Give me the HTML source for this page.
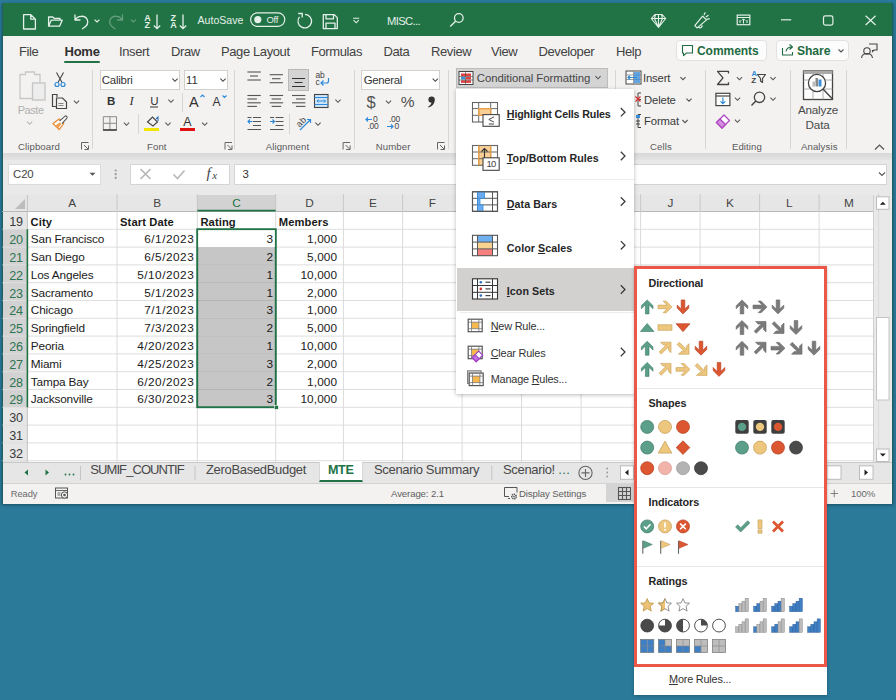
<!DOCTYPE html><html><head><meta charset="utf-8"><style>
html,body{margin:0;padding:0;}
body{width:896px;height:700px;overflow:hidden;position:relative;background:#2b7a9a;font-family:"Liberation Sans", sans-serif;}
.t{position:absolute;white-space:nowrap;font-family:"Liberation Sans", sans-serif;}
.b{position:absolute;box-sizing:border-box;}
.s{position:absolute;left:0;top:0;overflow:visible;}
</style></head><body>
<div class="b" style="left:2px;top:3px;width:891px;height:500.8px;background:#1f5f5f;box-shadow:0 1px 3px rgba(0,20,30,0.45);"></div>
<div class="b" style="left:2.5px;top:3px;width:889.0px;height:500.5px;background:#f3f2f1;"></div>
<div class="b" style="left:2.5px;top:3px;width:889.0px;height:33px;background:#217346;"></div>
<svg class="s" width="896" height="700" viewBox="0 0 896 700" style=""><path d="M23.6,14.6 h7.2 l4.6,4.6 v9.8 h-11.8 z M30.8,14.6 v4.6 h4.6" fill="none" stroke="#e4f0e8" stroke-width="1.3" stroke-linejoin="round"/><path d="M48.6,26.2 v-9.2 h4.2 l1.4,1.4 h5.8 v1.6 M48.6,26.2 l2.6,-6 h11 l-2.6,6 z" fill="none" stroke="#e4f0e8" stroke-width="1.3" stroke-linejoin="round"/><path d="M75,15 v5 h5 M75.3,19.8 C77.5,15.5 85,14.8 87.2,19.5 C88.8,23 86.5,26.5 82.5,28.8" fill="none" stroke="#e4f0e8" stroke-width="1.3" stroke-linecap="round" stroke-linejoin="round"/><path d="M94.6,19.6 l2.4,2.4 l2.4,-2.4" fill="none" stroke="#e4f0e8" stroke-width="1.2"/><g opacity="0.35"><path d="M122.5,15 v5 h-5 M122.2,19.8 C120,15.5 112.5,14.8 110.3,19.5 C108.7,23 111,26.5 115,28.8" fill="none" stroke="#e4f0e8" stroke-width="1.3" stroke-linecap="round" stroke-linejoin="round"/><path d="M131,19.6 l2.4,2.4 l2.4,-2.4" fill="none" stroke="#e4f0e8" stroke-width="1.2"/></g><path d="M157,14.5 v14 M153.8,25.5 l3.2,3.2 l3.2,-3.2" fill="none" stroke="#e4f0e8" stroke-width="1.3"/><path d="M183,14.5 v14 M179.8,25.5 l3.2,3.2 l3.2,-3.2" fill="none" stroke="#e4f0e8" stroke-width="1.3"/><rect x="250.6" y="12.9" width="34.2" height="13.4" rx="6.7" fill="none" stroke="#e4f0e8" stroke-width="1.2"/><circle cx="257.8" cy="19.6" r="3.6" fill="#e4f0e8"/><path d="M299.5,16.8 A6.8,6.8 0 1 0 305,14.3" fill="none" stroke="#e4f0e8" stroke-width="1.3"/><path d="M298.2,13.5 h4 v4" fill="none" stroke="#e4f0e8" stroke-width="1.3"/><path d="M323.3,14.6 h11 l3,3 v11 h-14 z M326,14.6 v4.2 h7.5 v-4.2 M326,28.6 v-5.5 h9 v5.5" fill="none" stroke="#e4f0e8" stroke-width="1.3" stroke-linejoin="round"/><path d="M353.2,18.2 h6 M353.6,20.2 l2.6,2.6 l2.6,-2.6" fill="none" stroke="#e4f0e8" stroke-width="1.1"/><circle cx="458.8" cy="18" r="4.3" fill="none" stroke="#e4f0e8" stroke-width="1.3"/><path d="M455.6,21.3 l-5.4,5.2" stroke="#e4f0e8" stroke-width="1.4"/><path d="M651.3,18.5 l3.6,-4 h7.2 l3.6,4 l-7.2,9 z M651.3,18.5 h14.4 M658.5,14.5 v13 M655.5,14.5 l-1,4 l4,9 M661.5,14.5 l1,4 l-4,9" fill="none" stroke="#e4f0e8" stroke-width="1.1" stroke-linejoin="round"/><path d="M694.8,25.6 L702.6,16.2 L706.6,19.9 L697.2,27.9 Z M698.8,27.1 a1.9,1.9 0 0 0 3.3,-1.6 M704.2,14.6 l0.9,-1.9 M706.2,16.7 l1.9,-1.3 M707.2,19.1 l2.1,-0.3" fill="none" stroke="#e4f0e8" stroke-width="1.2" stroke-linejoin="round" stroke-linecap="round"/><rect x="737.2" y="15.1" width="12.6" height="9.6" fill="none" stroke="#e4f0e8" stroke-width="1.2"/><path d="M737.2,17.5 h12.6 M740,23 v-3 M747,23 v-3 M743.5,23.5 v-4.5 M741.8,20.5 l1.7,-1.7 l1.7,1.7" fill="none" stroke="#e4f0e8" stroke-width="1"/><path d="M781,19.8 h10.2" stroke="#e4f0e8" stroke-width="1.2"/><rect x="823.5" y="15.9" width="9.4" height="9.2" rx="1.8" fill="none" stroke="#e4f0e8" stroke-width="1.2"/><path d="M865.6,15.8 l10,9.2 M875.6,15.8 l-10,9.2" stroke="#e4f0e8" stroke-width="1.2"/></svg>
<div class="t" style="left:144.2px;top:13.50px;height:9px;line-height:9px;font-size:9px;font-weight:700;color:#e4f0e8;letter-spacing:0px;">A</div>
<div class="t" style="left:144.6px;top:21.30px;height:9px;line-height:9px;font-size:9px;font-weight:700;color:#e4f0e8;letter-spacing:0px;">Z</div>
<div class="t" style="left:170.6px;top:13.50px;height:9px;line-height:9px;font-size:9px;font-weight:700;color:#e4f0e8;letter-spacing:0px;">Z</div>
<div class="t" style="left:170.2px;top:21.30px;height:9px;line-height:9px;font-size:9px;font-weight:700;color:#e4f0e8;letter-spacing:0px;">A</div>
<div class="t" style="left:197.5px;top:12.50px;height:15px;line-height:15px;font-size:10.6px;font-weight:400;color:#e4f0e8;letter-spacing:0px;">AutoSave</div>
<div class="t" style="left:266.5px;top:13.30px;height:13px;line-height:13px;font-size:9.5px;font-weight:400;color:#e4f0e8;letter-spacing:-0.3px;">Off</div>
<div class="t" style="left:387px;top:13.30px;height:16px;line-height:16px;font-size:11.2px;font-weight:400;color:#e4f0e8;letter-spacing:-0.6px;">MISC...</div>
<div class="t" style="left:19px;top:43.30px;height:18px;line-height:18px;font-size:13px;font-weight:400;color:#424242;letter-spacing:-0.4px;">File</div>
<div class="t" style="left:119px;top:43.30px;height:18px;line-height:18px;font-size:13px;font-weight:400;color:#424242;letter-spacing:-0.4px;">Insert</div>
<div class="t" style="left:171px;top:43.30px;height:18px;line-height:18px;font-size:13px;font-weight:400;color:#424242;letter-spacing:-0.4px;">Draw</div>
<div class="t" style="left:221px;top:43.30px;height:18px;line-height:18px;font-size:13px;font-weight:400;color:#424242;letter-spacing:-0.4px;">Page Layout</div>
<div class="t" style="left:311px;top:43.30px;height:18px;line-height:18px;font-size:13px;font-weight:400;color:#424242;letter-spacing:-0.4px;">Formulas</div>
<div class="t" style="left:383.5px;top:43.30px;height:18px;line-height:18px;font-size:13px;font-weight:400;color:#424242;letter-spacing:-0.4px;">Data</div>
<div class="t" style="left:431px;top:43.30px;height:18px;line-height:18px;font-size:13px;font-weight:400;color:#424242;letter-spacing:-0.4px;">Review</div>
<div class="t" style="left:491px;top:43.30px;height:18px;line-height:18px;font-size:13px;font-weight:400;color:#424242;letter-spacing:-0.4px;">View</div>
<div class="t" style="left:538.5px;top:43.30px;height:18px;line-height:18px;font-size:13px;font-weight:400;color:#424242;letter-spacing:-0.4px;">Developer</div>
<div class="t" style="left:616px;top:43.30px;height:18px;line-height:18px;font-size:13px;font-weight:400;color:#424242;letter-spacing:-0.4px;">Help</div>
<div class="t" style="left:64.5px;top:43.30px;height:18px;line-height:18px;font-size:13px;font-weight:700;color:#303030;letter-spacing:-0.25px;">Home</div>
<div class="b" style="left:64px;top:61px;width:36px;height:2px;background:#217346;border-radius:1px;"></div>
<div class="b" style="left:675.5px;top:40px;width:91.0px;height:21px;background:#fcfcfc;border:1px solid #e3e1df;border-radius:4px;"></div>
<div class="b" style="left:776px;top:40px;width:73px;height:21px;background:#fcfcfc;border:1px solid #e3e1df;border-radius:4px;"></div>
<svg class="s" width="896" height="700" viewBox="0 0 896 700" style=""><path d="M682.5,45.5 h10 v7.5 h-6 l-3,2.6 v-2.6 h-1 z" fill="none" stroke="#1f6b41" stroke-width="1.1" stroke-linejoin="round"/><path d="M782.5,48 v7 h10 v-3 M786,51.5 c0.5,-3 2.5,-4.5 6,-4.5 M789.5,44.5 l3,2.5 l-3,2.5" fill="none" stroke="#1f6b41" stroke-width="1.1" stroke-linejoin="round"/><path d="M838.5,49.5 l2.5,2.5 l2.5,-2.5" fill="none" stroke="#555" stroke-width="1.1"/><circle cx="867" cy="51" r="3.2" fill="none" stroke="#444" stroke-width="1.1"/><path d="M861.5,58 c0.5,-3.5 2.5,-4.5 5.5,-4.5 c3,0 5,1 5.5,4.5 M869,44 h8 v6 h-3 l-1.5,1.5 v-1.5" fill="none" stroke="#444" stroke-width="1.1"/></svg>
<div class="t" style="left:697px;top:42.50px;height:17px;line-height:17px;font-size:12px;font-weight:700;color:#1f6b41;letter-spacing:-0.05px;">Comments</div>
<div class="t" style="left:797px;top:42.50px;height:17px;line-height:17px;font-size:12.2px;font-weight:700;color:#1f6b41;letter-spacing:-0.1px;">Share</div>
<div class="b" style="left:2.5px;top:152.5px;width:889.0px;height:10.5px;background:linear-gradient(#d8d8d8,#e9e9e9);"></div>
<div class="b" style="left:91.5px;top:70px;width:1.0px;height:79px;background:#d6d6d6;"></div>
<div class="b" style="left:234.2px;top:70px;width:1.0px;height:79px;background:#d6d6d6;"></div>
<div class="b" style="left:353.8px;top:70px;width:1.0px;height:79px;background:#d6d6d6;"></div>
<div class="b" style="left:447.8px;top:70px;width:1.0px;height:79px;background:#d6d6d6;"></div>
<div class="b" style="left:615.2px;top:70px;width:1.0px;height:79px;background:#d6d6d6;"></div>
<div class="b" style="left:704.6px;top:70px;width:1.0px;height:79px;background:#d6d6d6;"></div>
<div class="b" style="left:789.5px;top:70px;width:1.0px;height:79px;background:#d6d6d6;"></div>
<div class="b" style="left:846.2px;top:70px;width:1.0px;height:79px;background:#d6d6d6;"></div>
<div class="t" style="left:18px;top:140.10px;height:13px;line-height:13px;font-size:9.6px;font-weight:400;color:#5a5a5a;letter-spacing:0.1px;">Clipboard</div>
<div class="t" style="left:147px;top:140.10px;height:13px;line-height:13px;font-size:9.6px;font-weight:400;color:#5a5a5a;letter-spacing:0.1px;">Font</div>
<div class="t" style="left:265.7px;top:140.10px;height:13px;line-height:13px;font-size:9.6px;font-weight:400;color:#5a5a5a;letter-spacing:0.1px;">Alignment</div>
<div class="t" style="left:375.8px;top:140.10px;height:13px;line-height:13px;font-size:9.6px;font-weight:400;color:#5a5a5a;letter-spacing:0.1px;">Number</div>
<div class="t" style="left:650px;top:140.10px;height:13px;line-height:13px;font-size:9.6px;font-weight:400;color:#5a5a5a;letter-spacing:0.1px;">Cells</div>
<div class="t" style="left:731.9px;top:140.10px;height:13px;line-height:13px;font-size:9.6px;font-weight:400;color:#5a5a5a;letter-spacing:0.1px;">Editing</div>
<div class="t" style="left:801px;top:140.10px;height:13px;line-height:13px;font-size:9.6px;font-weight:400;color:#5a5a5a;letter-spacing:0.1px;">Analysis</div>
<div class="b" style="left:99.9px;top:69.6px;width:80.5px;height:20.700000000000003px;background:#fff;border:1px solid #d0d0d0;"></div>
<div class="b" style="left:183.7px;top:69.6px;width:44.80000000000001px;height:20.700000000000003px;background:#fff;border:1px solid #d0d0d0;"></div>
<div class="t" style="left:101.8px;top:71.80px;height:16px;line-height:16px;font-size:11.4px;font-weight:400;color:#333;letter-spacing:-0.2px;">Calibri</div>
<div class="t" style="left:186px;top:71.80px;height:16px;line-height:16px;font-size:11.4px;font-weight:400;color:#333;letter-spacing:0px;">11</div>
<div class="b" style="left:182px;top:93px;width:1px;height:19px;background:#d6d6d6;"></div>
<div class="b" style="left:137.5px;top:114px;width:1.0px;height:20px;background:#d6d6d6;"></div>
<div class="t" style="left:107px;top:93.00px;height:16px;line-height:16px;font-size:11.5px;font-weight:700;color:#333;letter-spacing:0px;">B</div>
<div class="t" style="left:129.5px;top:92.00px;height:18px;line-height:18px;font-size:12.5px;font-weight:400;color:#333;letter-spacing:0px;font-style:italic;font-family:'Liberation Serif';">I</div>
<div class="t" style="left:150.3px;top:92.50px;height:16px;line-height:16px;font-size:11.5px;font-weight:400;color:#333;letter-spacing:0px;">U</div>
<div class="t" style="left:189px;top:91.50px;height:20px;line-height:20px;font-size:14.5px;font-weight:400;color:#333;letter-spacing:0px;">A</div>
<div class="t" style="left:212.5px;top:94.00px;height:17px;line-height:17px;font-size:12px;font-weight:400;color:#333;letter-spacing:0px;">A</div>
<div class="b" style="left:144.3px;top:127.6px;width:14.699999999999989px;height:3.8000000000000114px;background:#f2e600;"></div>
<div class="t" style="left:183.2px;top:113.50px;height:17px;line-height:17px;font-size:12.4px;font-weight:400;color:#333;letter-spacing:0px;">A</div>
<div class="b" style="left:180.4px;top:127.6px;width:14.900000000000006px;height:3.8000000000000114px;background:#e01010;"></div>
<div class="b" style="left:288.2px;top:69.3px;width:20.80000000000001px;height:21.5px;background:#d4d4d4;border:1px solid #b8b8b8;"></div>
<div class="t" style="left:315.5px;top:70.50px;height:9px;line-height:9px;font-size:8.5px;font-weight:400;color:#444;letter-spacing:-0.2px;">ab</div>
<div class="t" style="left:315.5px;top:78.00px;height:9px;line-height:9px;font-size:8.5px;font-weight:400;color:#444;letter-spacing:0px;">c</div>
<div class="b" style="left:289.2px;top:114px;width:1.0px;height:20px;background:#d6d6d6;"></div>
<div class="t" style="left:295.5px;top:117px;font-size:9px;color:#444;transform:rotate(-45deg);transform-origin:5px 5px;line-height:10px;">ab</div>
<div class="b" style="left:361.4px;top:69.7px;width:79.0px;height:20.700000000000003px;background:#fff;border:1px solid #d0d0d0;"></div>
<div class="t" style="left:363.8px;top:72.00px;height:16px;line-height:16px;font-size:11.4px;font-weight:400;color:#333;letter-spacing:-0.35px;">General</div>
<div class="t" style="left:366.4px;top:90.70px;height:23px;line-height:23px;font-size:16.5px;font-weight:400;color:#555;letter-spacing:0px;">$</div>
<div class="t" style="left:400.8px;top:91.30px;height:22px;line-height:22px;font-size:15.5px;font-weight:400;color:#505050;letter-spacing:-0.5px;">%</div>
<div class="t" style="left:373px;top:115.30px;height:9px;line-height:9px;font-size:8.5px;font-weight:400;color:#444;letter-spacing:0px;">0</div>
<div class="t" style="left:367.5px;top:122.00px;height:9px;line-height:9px;font-size:8.5px;font-weight:400;color:#444;letter-spacing:-0.3px;">.00</div>
<div class="t" style="left:389px;top:115.30px;height:9px;line-height:9px;font-size:8.5px;font-weight:400;color:#444;letter-spacing:-0.3px;">.00</div>
<div class="t" style="left:394.5px;top:122.00px;height:9px;line-height:9px;font-size:8.5px;font-weight:400;color:#444;letter-spacing:0px;">0</div>
<div class="b" style="left:456.2px;top:67.6px;width:151.8px;height:20.700000000000003px;background:#d4d4d4;border:1px solid #bdbdbd;"></div>
<div class="t" style="left:476.8px;top:70.20px;height:16px;line-height:16px;font-size:11.4px;font-weight:400;color:#454545;letter-spacing:-0.05px;">Conditional Formatting</div>
<div class="t" style="left:643px;top:70.40px;height:16px;line-height:16px;font-size:11.3px;font-weight:400;color:#3a3a3a;letter-spacing:-0.15px;">Insert</div>
<div class="t" style="left:644px;top:91.90px;height:16px;line-height:16px;font-size:11.3px;font-weight:400;color:#3a3a3a;letter-spacing:-0.15px;">Delete</div>
<div class="t" style="left:644px;top:113.30px;height:16px;line-height:16px;font-size:11.3px;font-weight:400;color:#3a3a3a;letter-spacing:-0.15px;">Format</div>
<div class="t" style="left:751.5px;top:70.00px;height:8px;line-height:8px;font-size:7.5px;font-weight:700;color:#2e8ad8;letter-spacing:0px;">A</div>
<div class="t" style="left:751.2px;top:77.00px;height:8px;line-height:8px;font-size:8px;font-weight:700;color:#444;letter-spacing:0px;">Z</div>
<svg class="s" width="896" height="700" viewBox="0 0 896 700" style=""><path d="M81.5,149.5 v-7 h7 M84,145 l4,4 M88.5,145.5 v4 h-4" fill="none" stroke="#666" stroke-width="1"/><path d="M225.0,149.5 v-7 h7 M227.5,145 l4,4 M232.0,145.5 v4 h-4" fill="none" stroke="#666" stroke-width="1"/><path d="M343.1,149.5 v-7 h7 M345.6,145 l4,4 M350.1,145.5 v4 h-4" fill="none" stroke="#666" stroke-width="1"/><path d="M437.5,149.5 v-7 h7 M440,145 l4,4 M444.5,145.5 v4 h-4" fill="none" stroke="#666" stroke-width="1"/><path d="M875,149.5 l4.5,-4.5 l4.5,4.5" fill="none" stroke="#555" stroke-width="1.2"/><path d="M20,74.5 h5.5 v-2.5 h9 v2.5 h5.5 v24 h-20 z" fill="none" stroke="#c8c8c8" stroke-width="1.3"/><rect x="32.5" y="83" width="12.5" height="17" fill="#ededed" stroke="#c4c4c4" stroke-width="1.3"/><path d="M27.0,121.7 l2.6,2.6 l2.6,-2.6" fill="none" stroke="#b5b5b5" stroke-width="1.1"/><path d="M56.5,72.5 l5.5,10 M63.5,72.5 l-5.5,10" stroke="#444" stroke-width="1.1"/><circle cx="57" cy="84.5" r="2" fill="none" stroke="#2e8ad8" stroke-width="1.2"/><circle cx="63" cy="84.5" r="2" fill="none" stroke="#2e8ad8" stroke-width="1.2"/><path d="M57,97 v-2.5 h-4.5 v12 h3.5 M56.5,98 h6 l4,4 v6.5 h-10 z" fill="none" stroke="#444" stroke-width="1.2"/><path d="M58.5,103.5 h5 M58.5,105.5 h5" stroke="#666" stroke-width="0.8"/><path d="M73.9,100.7 l2.6,2.6 l2.6,-2.6" fill="none" stroke="#555" stroke-width="1.1"/><path d="M53,123.5 l6.2,-4.6 l4.6,4.6 l-4.6,6.2 z" fill="#fff" stroke="#e8892e" stroke-width="1.2" stroke-linejoin="round"/><path d="M55.2,125.7 l4.6,-3.4 l1.6,1.6 l-3.4,4.6 z" fill="#f0a050"/><path d="M59.5,121.2 l5.3,-4.8 a1.3,1.3 0 0 1 1.9,1.9 l-4.8,5.3" fill="#fff" stroke="#555" stroke-width="1.1"/><path d="M172.4,78.7 l2.6,2.6 l2.6,-2.6" fill="none" stroke="#444" stroke-width="1.1"/><path d="M220.4,78.7 l2.6,2.6 l2.6,-2.6" fill="none" stroke="#444" stroke-width="1.1"/><path d="M150,107 h8" stroke="#333" stroke-width="1"/><path d="M168.4,99.7 l2.6,2.6 l2.6,-2.6" fill="none" stroke="#555" stroke-width="1.1"/><path d="M200.5,97 l2,-2 l2,2" fill="none" stroke="#2e8ad8" stroke-width="1.2"/><path d="M222.5,95.5 l2,2 l2,-2" fill="none" stroke="#2e8ad8" stroke-width="1.2"/><path d="M103.3,116.7 h13.2 v13.2 h-13.2 z M109.9,116.7 v13.2 M103.3,123.3 h13.2" fill="none" stroke="#8a8a8a" stroke-width="1"/><path d="M103,130 h13.8" stroke="#444" stroke-width="1.6"/><path d="M123.9,122.7 l2.6,2.6 l2.6,-2.6" fill="none" stroke="#555" stroke-width="1.1"/><path d="M147.5,122 l5,-5 l5,5 l-4.5,4 z" fill="none" stroke="#444" stroke-width="1.1"/><path d="M156,119 l2,-2 v4" fill="none" stroke="#2e6fb8" stroke-width="1.1"/><path d="M165.4,122.7 l2.6,2.6 l2.6,-2.6" fill="none" stroke="#555" stroke-width="1.1"/><path d="M202.1,122.7 l2.6,2.6 l2.6,-2.6" fill="none" stroke="#555" stroke-width="1.1"/><path d="M247.4,72 h13.4" stroke="#555" stroke-width="1.1"/><path d="M247.4,76 h0" stroke="#555" stroke-width="1.1"/><path d="M247.4,80 h13.4" stroke="#555" stroke-width="1.1"/><path d="M250,76 h8" stroke="#555" stroke-width="1.1"/><path d="M269.7,74.7 h13.2" stroke="#555" stroke-width="1.1"/><path d="M269.7,82.7 h13.2" stroke="#555" stroke-width="1.1"/><path d="M272,78.7 h8.5" stroke="#555" stroke-width="1.1"/><path d="M292,78.5 h13 M294.5,82.5 h8 M292,86.5 h13" stroke="#333" stroke-width="1.2"/><path d="M328.5,78 v3 a2,2 0 0 1 -2,2 h-5 M323.5,80.5 l-2.5,2.5 l2.5,2.5" fill="none" stroke="#2e8ad8" stroke-width="1.2"/><path d="M247.4,95.5 h13.4" stroke="#555" stroke-width="1.1"/><path d="M247.4,99 h9.5" stroke="#555" stroke-width="1.1"/><path d="M247.4,102.8 h13.4" stroke="#555" stroke-width="1.1"/><path d="M247.4,106.4 h9.5" stroke="#555" stroke-width="1.1"/><path d="M269.7,95.5 h13.4" stroke="#555" stroke-width="1.1"/><path d="M271.65,99 h9.5" stroke="#555" stroke-width="1.1"/><path d="M269.7,102.8 h13.4" stroke="#555" stroke-width="1.1"/><path d="M271.65,106.4 h9.5" stroke="#555" stroke-width="1.1"/><path d="M292.0,95.5 h13.4" stroke="#555" stroke-width="1.1"/><path d="M295.9,99 h9.5" stroke="#555" stroke-width="1.1"/><path d="M292.0,102.8 h13.4" stroke="#555" stroke-width="1.1"/><path d="M295.9,106.4 h9.5" stroke="#555" stroke-width="1.1"/><rect x="314.5" y="94.5" width="13.5" height="13" fill="#cfe6f8" stroke="#444" stroke-width="1.1"/><path d="M314.5,97.5 h13.5 M314.5,104.5 h13.5" stroke="#2e8ad8" stroke-width="1"/><path d="M317,101 h8.5 M318.5,99.5 l-1.5,1.5 l1.5,1.5 M324,99.5 l1.5,1.5 l-1.5,1.5" fill="none" stroke="#2e8ad8" stroke-width="1"/><path d="M335.4,99.7 l2.6,2.6 l2.6,-2.6" fill="none" stroke="#555" stroke-width="1.1"/><path d="M253,117.5 h8 M253,121.5 h8 M253,125.5 h8 M247.5,129.5 h13.5 M247.5,117.5 h4 " stroke="#555" stroke-width="1.1"/><path d="M248,121.5 h4.5 M250,119.5 l-2,2 l2,2" fill="none" stroke="#2e8ad8" stroke-width="1.1"/><path d="M275.5,117.5 h8 M275.5,121.5 h8 M275.5,125.5 h8 M270,129.5 h13.5 M270,117.5 h4" stroke="#555" stroke-width="1.1"/><path d="M270,121.5 h4.5 M272.5,119.5 l2,2 l-2,2" fill="none" stroke="#2e8ad8" stroke-width="1.1"/><path d="M300,130 l10.5,-10.5 M307,119.5 h3.5 v3.5" fill="none" stroke="#2e8ad8" stroke-width="1.2"/><path d="M315.4,122.7 l2.6,2.6 l2.6,-2.6" fill="none" stroke="#555" stroke-width="1.1"/><path d="M432.7,78.7 l2.6,2.6 l2.6,-2.6" fill="none" stroke="#444" stroke-width="1.1"/><path d="M385.9,100.7 l2.6,2.6 l2.6,-2.6" fill="none" stroke="#555" stroke-width="1.1"/><circle cx="431.6" cy="99.6" r="3.2" fill="#333"/><path d="M434.5,100.5 C434.5,104 432,106.5 428.5,107.5 L428.2,106.6 C430.3,105.6 431.6,103.8 431.6,101.8 Z" fill="#333"/><path d="M366,119.5 h6 M368,117.5 l-2,2 l2,2" fill="none" stroke="#2e8ad8" stroke-width="1.2"/><path d="M387,126.5 h6 M391,124.5 l2,2 l-2,2" fill="none" stroke="#2e8ad8" stroke-width="1.2"/><rect x="459" y="71.5" width="14" height="13" fill="#fff" stroke="#444" stroke-width="1"/><rect x="461" y="73.5" width="10" height="2.6" fill="#e04040"/><rect x="461" y="76.9" width="4" height="2.6" fill="#3b8ed8"/><rect x="466" y="76.9" width="5" height="2.6" fill="#e04040"/><rect x="461" y="80.3" width="10" height="2.6" fill="#e04040"/><path d="M465.5,71.5 v13 M459,76.5 h14 M459,80 h14" stroke="#444" stroke-width="0.6"/><path d="M595.4,76.2 l2.6,2.6 l2.6,-2.6" fill="none" stroke="#555" stroke-width="1.1"/><rect x="626" y="71" width="15" height="13" fill="#fff" stroke="#444" stroke-width="1"/><path d="M626,75 h15 M626,79.5 h15 M633.5,71 v13" stroke="#777" stroke-width="0.7"/><rect x="634" y="72" width="6" height="11" fill="#3b8ed8" opacity="0.8"/><path d="M637,77.5 h-9 M630,75.5 l-2,2 l2,2" fill="none" stroke="#2e8ad8" stroke-width="1.2"/><path d="M680.4,77.10000000000001 l2.6,2.6 l2.6,-2.6" fill="none" stroke="#555" stroke-width="1.1"/><path d="M641,93 h-3 v13 h3 M641,99.5 h-3" fill="none" stroke="#444" stroke-width="1"/><path d="M635.5,96.5 l5,5 M640.5,96.5 l-5,5" stroke="#e03030" stroke-width="1.2"/><path d="M686.4,98.60000000000001 l2.6,2.6 l2.6,-2.6" fill="none" stroke="#555" stroke-width="1.1"/><path d="M641,114.5 h-3 v13 h3" fill="none" stroke="#444" stroke-width="1"/><rect x="636" y="115" width="4" height="3" fill="#3b8ed8"/><path d="M636,121 h4 M636,124 h4" stroke="#444" stroke-width="1"/><path d="M682.4,120.0 l2.6,2.6 l2.6,-2.6" fill="none" stroke="#555" stroke-width="1.1"/><path d="M728.5,73.5 v-2.2 h-11 l5.5,6.6 l-5.5,6.6 h11 v-2.2" fill="none" stroke="#444" stroke-width="1.3" stroke-linejoin="round"/><path d="M736.9,77.2 l2.6,2.6 l2.6,-2.6" fill="none" stroke="#555" stroke-width="1.1"/><path d="M757.5,74.5 h8 l-3,4 v4 l-2,-1.5 v-2.5 z" fill="none" stroke="#444" stroke-width="1.2" stroke-linejoin="round"/><path d="M770.4,77.2 l2.6,2.6 l2.6,-2.6" fill="none" stroke="#555" stroke-width="1.1"/><rect x="715.9" y="93.3" width="14" height="12.3" fill="#fff" stroke="#444" stroke-width="1.2"/><path d="M715.9,96 h14" stroke="#444" stroke-width="1.2"/><path d="M722.9,97.5 v6 M720.5,101.3 l2.4,2.4 l2.4,-2.4" fill="none" stroke="#2e8ad8" stroke-width="1.2"/><path d="M734.9,97.7 l2.6,2.6 l2.6,-2.6" fill="none" stroke="#555" stroke-width="1.1"/><circle cx="759.5" cy="97.3" r="5.2" fill="none" stroke="#444" stroke-width="1.3"/><path d="M755.8,101 l-4.3,4.5" stroke="#444" stroke-width="1.4"/><path d="M770.4,97.7 l2.6,2.6 l2.6,-2.6" fill="none" stroke="#555" stroke-width="1.1"/><path d="M716.5,122.5 l7.5,-7.5 l5.5,5.5 l-7.5,7.5 z" fill="#fff" stroke="#b146c2" stroke-width="1.3" stroke-linejoin="round"/><path d="M716.5,122.5 l3.5,-3.5 l5.5,5.5 l-3.5,3.5 z" fill="#d68ee0" stroke="#b146c2" stroke-width="1.3"/><path d="M734.9,119.7 l2.6,2.6 l2.6,-2.6" fill="none" stroke="#555" stroke-width="1.1"/><rect x="803.5" y="71" width="29" height="28.5" fill="#fff" stroke="#444" stroke-width="1.3"/><rect x="803.5" y="71" width="29" height="3" fill="#aaa"/><path d="M803.5,80 h29 M803.5,89 h29 M813,74 v25.5 M823,74 v25.5" stroke="#999" stroke-width="0.8"/><circle cx="817" cy="83" r="8.6" fill="#fff" stroke="#444" stroke-width="1.3"/><path d="M823,89 l9,9.5" stroke="#444" stroke-width="1.4"/><rect x="812.5" y="81.5" width="2.5" height="5" fill="#bbb"/><rect x="815.5" y="78" width="2.5" height="8.5" fill="#888" /><rect x="818.5" y="79.5" width="3" height="7" fill="#3b8ed8"/></svg>
<div class="t" style="left:668px;width:300px;text-align:center;top:101.70px;height:16px;line-height:16px;font-size:11.7px;font-weight:400;color:#4a4a4a;letter-spacing:-0.2px;">Analyze</div>
<div class="t" style="left:667.6px;width:300px;text-align:center;top:116.50px;height:16px;line-height:16px;font-size:11.7px;font-weight:400;color:#4a4a4a;letter-spacing:-0.1px;">Data</div>
<div class="t" style="left:17.7px;top:102.80px;height:15px;line-height:15px;font-size:11px;font-weight:400;color:#b0b0b0;letter-spacing:-0.45px;">Paste</div>
<div class="b" style="left:2.5px;top:160px;width:889.0px;height:35px;background:#e9e9e9;"></div>
<div class="b" style="left:8px;top:163.5px;width:93px;height:21.5px;background:#fff;border:1px solid #dcdcdc;"></div>
<div class="t" style="left:13px;top:166.30px;height:16px;line-height:16px;font-size:11.4px;font-weight:400;color:#444;letter-spacing:-0.1px;">C20</div>
<div class="b" style="left:129.7px;top:163.5px;width:100.5px;height:21.30000000000001px;background:#fff;border:1px solid #d4d4d4;"></div>
<div class="b" style="left:233.5px;top:163.5px;width:653.9px;height:21.30000000000001px;background:#fff;border:1px solid #d4d4d4;"></div>
<svg class="s" width="896" height="700" viewBox="0 0 896 700" style=""><path d="M89.5,172.8 h6 l-3,3 z" fill="#555"/><circle cx="115.7" cy="170.5" r="1.1" fill="#999"/><circle cx="115.7" cy="174.2" r="1.1" fill="#999"/><circle cx="115.7" cy="177.9" r="1.1" fill="#999"/><path d="M140.5,169 l10,10 M150.5,169 l-10,10" stroke="#b8b8b8" stroke-width="1.7"/><path d="M173.5,174.5 l4,4 l7,-8" fill="none" stroke="#b8b8b8" stroke-width="1.7"/><path d="M879,172.5 l3,3 l3,-3" fill="none" stroke="#555" stroke-width="1.1"/></svg>
<div class="t" style="left:206.5px;top:163.30px;height:21px;line-height:21px;font-size:15px;font-weight:400;color:#444;letter-spacing:0px;font-style:italic;font-family:'Liberation Serif';">f</div>
<div class="t" style="left:212.3px;top:168.10px;height:15px;line-height:15px;font-size:11px;font-weight:400;color:#444;letter-spacing:0px;font-style:italic;font-family:'Liberation Serif';">x</div>
<div class="t" style="left:242.5px;top:166.30px;height:16px;line-height:16px;font-size:11.4px;font-weight:400;color:#333;letter-spacing:0px;">3</div>
<div class="b" style="left:2.5px;top:195px;width:889.0px;height:16.5px;background:#e6e6e6;"></div>
<div class="b" style="left:27.4px;top:211.5px;width:846.1px;height:250.5px;background:#fff;"></div>
<div class="b" style="left:2.5px;top:211.5px;width:24.9px;height:250.5px;background:#e6e6e6;"></div>
<div class="b" style="left:873.5px;top:195px;width:18.0px;height:267px;background:#e9e9e9;"></div>
<div class="b" style="left:2.5px;top:229.3px;width:24.9px;height:178.0px;background:#d2d2d2;"></div>
<div class="b" style="left:197.3px;top:195px;width:78.39999999999998px;height:16.5px;background:#d2d2d2;"></div>
<div class="b" style="left:197.3px;top:247.1px;width:78.39999999999998px;height:160.20000000000002px;background:#c6c6c6;"></div>
<svg class="s" width="896" height="700" viewBox="0 0 896 700" style=""><path d="M2.5,211.50 H873.5" stroke="#dedede" stroke-width="1"/><path d="M2.5,229.30 H873.5" stroke="#dedede" stroke-width="1"/><path d="M2.5,247.10 H873.5" stroke="#dedede" stroke-width="1"/><path d="M2.5,264.90 H873.5" stroke="#dedede" stroke-width="1"/><path d="M2.5,282.70 H873.5" stroke="#dedede" stroke-width="1"/><path d="M2.5,300.50 H873.5" stroke="#dedede" stroke-width="1"/><path d="M2.5,318.30 H873.5" stroke="#dedede" stroke-width="1"/><path d="M2.5,336.10 H873.5" stroke="#dedede" stroke-width="1"/><path d="M2.5,353.90 H873.5" stroke="#dedede" stroke-width="1"/><path d="M2.5,371.70 H873.5" stroke="#dedede" stroke-width="1"/><path d="M2.5,389.50 H873.5" stroke="#dedede" stroke-width="1"/><path d="M2.5,407.30 H873.5" stroke="#dedede" stroke-width="1"/><path d="M2.5,425.10 H873.5" stroke="#dedede" stroke-width="1"/><path d="M2.5,442.90 H873.5" stroke="#dedede" stroke-width="1"/><path d="M2.5,460.70 H873.5" stroke="#dedede" stroke-width="1"/><path d="M2.5,211.5 H873.5" stroke="#b9b9b9" stroke-width="1"/><path d="M197.3,247.10 H275.7" stroke="#b4b4b4" stroke-width="1"/><path d="M197.3,264.90 H275.7" stroke="#b4b4b4" stroke-width="1"/><path d="M197.3,282.70 H275.7" stroke="#b4b4b4" stroke-width="1"/><path d="M197.3,300.50 H275.7" stroke="#b4b4b4" stroke-width="1"/><path d="M197.3,318.30 H275.7" stroke="#b4b4b4" stroke-width="1"/><path d="M197.3,336.10 H275.7" stroke="#b4b4b4" stroke-width="1"/><path d="M197.3,353.90 H275.7" stroke="#b4b4b4" stroke-width="1"/><path d="M197.3,371.70 H275.7" stroke="#b4b4b4" stroke-width="1"/><path d="M197.3,389.50 H275.7" stroke="#b4b4b4" stroke-width="1"/><path d="M117,211.5 V462" stroke="#dadada" stroke-width="1"/><path d="M117,194 V211.5" stroke="#c8c8c8" stroke-width="1"/><path d="M197.3,211.5 V462" stroke="#dadada" stroke-width="1"/><path d="M197.3,194 V211.5" stroke="#c8c8c8" stroke-width="1"/><path d="M275.7,211.5 V462" stroke="#dadada" stroke-width="1"/><path d="M275.7,194 V211.5" stroke="#c8c8c8" stroke-width="1"/><path d="M343.4,211.5 V462" stroke="#dadada" stroke-width="1"/><path d="M343.4,194 V211.5" stroke="#c8c8c8" stroke-width="1"/><path d="M402.6,211.5 V462" stroke="#dadada" stroke-width="1"/><path d="M402.6,194 V211.5" stroke="#c8c8c8" stroke-width="1"/><path d="M462.1,211.5 V462" stroke="#dadada" stroke-width="1"/><path d="M462.1,194 V211.5" stroke="#c8c8c8" stroke-width="1"/><path d="M521.6,211.5 V462" stroke="#dadada" stroke-width="1"/><path d="M521.6,194 V211.5" stroke="#c8c8c8" stroke-width="1"/><path d="M581.1,211.5 V462" stroke="#dadada" stroke-width="1"/><path d="M581.1,194 V211.5" stroke="#c8c8c8" stroke-width="1"/><path d="M640.6,211.5 V462" stroke="#dadada" stroke-width="1"/><path d="M640.6,194 V211.5" stroke="#c8c8c8" stroke-width="1"/><path d="M700.1,211.5 V462" stroke="#dadada" stroke-width="1"/><path d="M700.1,194 V211.5" stroke="#c8c8c8" stroke-width="1"/><path d="M759.6,211.5 V462" stroke="#dadada" stroke-width="1"/><path d="M759.6,194 V211.5" stroke="#c8c8c8" stroke-width="1"/><path d="M819.1,211.5 V462" stroke="#dadada" stroke-width="1"/><path d="M819.1,194 V211.5" stroke="#c8c8c8" stroke-width="1"/><path d="M878.6,211.5 V462" stroke="#dadada" stroke-width="1"/><path d="M878.6,194 V211.5" stroke="#c8c8c8" stroke-width="1"/><path d="M27.4,195 V462" stroke="#c3c3c3" stroke-width="1"/><path d="M25,199 v10 h-10 z" fill="#bdbdbd"/><path d="M27.4,229.30 V407.30" stroke="#217346" stroke-width="1.6"/><path d="M197.3,210.7 H275.7" stroke="#217346" stroke-width="1.8"/><rect x="197.3" y="229.30" width="78.4" height="178.00" fill="none" stroke="#217346" stroke-width="1.6"/><rect x="197.3" y="229.30" width="78.4" height="17.80" fill="#fff" stroke="none"/><rect x="197.3" y="229.30" width="78.4" height="178.00" fill="none" stroke="#217346" stroke-width="1.6"/><rect x="274.3" y="405.3" width="4" height="4" fill="#217346" stroke="#fff" stroke-width="0.6"/><rect x="876.5" y="196.8" width="12.5" height="12.5" fill="#fff" stroke="#bbb" stroke-width="1"/><path d="M879.8,204.8 h6 l-3,-3 z" fill="#222"/><rect x="876.5" y="317.5" width="12.5" height="82.5" fill="#fff" stroke="#c4c4c4" stroke-width="1"/><path d="M873.5,195 V462" stroke="#d0d0d0" stroke-width="1"/><rect x="876.5" y="449" width="12.5" height="12.5" fill="#fff" stroke="#bbb" stroke-width="1"/><path d="M879.8,453.5 h6 l-3,3 z" fill="#222"/></svg>
<div class="t" style="left:-77.8px;width:300px;text-align:center;top:195.00px;height:17px;line-height:17px;font-size:11.8px;font-weight:400;color:#444;letter-spacing:0px;">A</div>
<div class="t" style="left:7.150000000000006px;width:300px;text-align:center;top:195.00px;height:17px;line-height:17px;font-size:11.8px;font-weight:400;color:#444;letter-spacing:0px;">B</div>
<div class="t" style="left:86.5px;width:300px;text-align:center;top:195.00px;height:17px;line-height:17px;font-size:11.8px;font-weight:400;color:#217346;letter-spacing:0px;">C</div>
<div class="t" style="left:159.54999999999995px;width:300px;text-align:center;top:195.00px;height:17px;line-height:17px;font-size:11.8px;font-weight:400;color:#444;letter-spacing:0px;">D</div>
<div class="t" style="left:223.0px;width:300px;text-align:center;top:195.00px;height:17px;line-height:17px;font-size:11.8px;font-weight:400;color:#444;letter-spacing:0px;">E</div>
<div class="t" style="left:282.35px;width:300px;text-align:center;top:195.00px;height:17px;line-height:17px;font-size:11.8px;font-weight:400;color:#444;letter-spacing:0px;">F</div>
<div class="t" style="left:341.85px;width:300px;text-align:center;top:195.00px;height:17px;line-height:17px;font-size:11.8px;font-weight:400;color:#444;letter-spacing:0px;">G</div>
<div class="t" style="left:401.35px;width:300px;text-align:center;top:195.00px;height:17px;line-height:17px;font-size:11.8px;font-weight:400;color:#444;letter-spacing:0px;">H</div>
<div class="t" style="left:460.85px;width:300px;text-align:center;top:195.00px;height:17px;line-height:17px;font-size:11.8px;font-weight:400;color:#444;letter-spacing:0px;">I</div>
<div class="t" style="left:520.35px;width:300px;text-align:center;top:195.00px;height:17px;line-height:17px;font-size:11.8px;font-weight:400;color:#444;letter-spacing:0px;">J</div>
<div class="t" style="left:579.85px;width:300px;text-align:center;top:195.00px;height:17px;line-height:17px;font-size:11.8px;font-weight:400;color:#444;letter-spacing:0px;">K</div>
<div class="t" style="left:639.35px;width:300px;text-align:center;top:195.00px;height:17px;line-height:17px;font-size:11.8px;font-weight:400;color:#444;letter-spacing:0px;">L</div>
<div class="t" style="left:698.85px;width:300px;text-align:center;top:195.00px;height:17px;line-height:17px;font-size:11.8px;font-weight:400;color:#444;letter-spacing:0px;">M</div>
<div class="t" style="left:-134.0px;width:300px;text-align:center;top:213.30px;height:18px;line-height:18px;font-size:12.6px;font-weight:400;color:#3a3a3a;letter-spacing:-0.3px;">19</div>
<div class="t" style="left:-134.0px;width:300px;text-align:center;top:231.10px;height:18px;line-height:18px;font-size:12.6px;font-weight:400;color:#2d7350;letter-spacing:-0.3px;">20</div>
<div class="t" style="left:-134.0px;width:300px;text-align:center;top:248.90px;height:18px;line-height:18px;font-size:12.6px;font-weight:400;color:#2d7350;letter-spacing:-0.3px;">21</div>
<div class="t" style="left:-134.0px;width:300px;text-align:center;top:266.70px;height:18px;line-height:18px;font-size:12.6px;font-weight:400;color:#2d7350;letter-spacing:-0.3px;">22</div>
<div class="t" style="left:-134.0px;width:300px;text-align:center;top:284.50px;height:18px;line-height:18px;font-size:12.6px;font-weight:400;color:#2d7350;letter-spacing:-0.3px;">23</div>
<div class="t" style="left:-134.0px;width:300px;text-align:center;top:302.30px;height:18px;line-height:18px;font-size:12.6px;font-weight:400;color:#2d7350;letter-spacing:-0.3px;">24</div>
<div class="t" style="left:-134.0px;width:300px;text-align:center;top:320.10px;height:18px;line-height:18px;font-size:12.6px;font-weight:400;color:#2d7350;letter-spacing:-0.3px;">25</div>
<div class="t" style="left:-134.0px;width:300px;text-align:center;top:337.90px;height:18px;line-height:18px;font-size:12.6px;font-weight:400;color:#2d7350;letter-spacing:-0.3px;">26</div>
<div class="t" style="left:-134.0px;width:300px;text-align:center;top:355.70px;height:18px;line-height:18px;font-size:12.6px;font-weight:400;color:#2d7350;letter-spacing:-0.3px;">27</div>
<div class="t" style="left:-134.0px;width:300px;text-align:center;top:373.50px;height:18px;line-height:18px;font-size:12.6px;font-weight:400;color:#2d7350;letter-spacing:-0.3px;">28</div>
<div class="t" style="left:-134.0px;width:300px;text-align:center;top:391.30px;height:18px;line-height:18px;font-size:12.6px;font-weight:400;color:#2d7350;letter-spacing:-0.3px;">29</div>
<div class="t" style="left:-134.0px;width:300px;text-align:center;top:409.10px;height:18px;line-height:18px;font-size:12.6px;font-weight:400;color:#3a3a3a;letter-spacing:-0.3px;">30</div>
<div class="t" style="left:-134.0px;width:300px;text-align:center;top:426.90px;height:18px;line-height:18px;font-size:12.6px;font-weight:400;color:#3a3a3a;letter-spacing:-0.3px;">31</div>
<div class="t" style="left:-134.0px;width:300px;text-align:center;top:444.70px;height:18px;line-height:18px;font-size:12.6px;font-weight:400;color:#3a3a3a;letter-spacing:-0.3px;">32</div>
<div class="t" style="left:30.5px;top:213.80px;height:16px;line-height:16px;font-size:11.2px;font-weight:700;color:#1a1a1a;letter-spacing:0.1px;">City</div>
<div class="t" style="left:120px;top:213.80px;height:16px;line-height:16px;font-size:11.2px;font-weight:700;color:#1a1a1a;letter-spacing:0.1px;">Start Date</div>
<div class="t" style="left:200.4px;top:213.80px;height:16px;line-height:16px;font-size:11.2px;font-weight:700;color:#1a1a1a;letter-spacing:0.1px;">Rating</div>
<div class="t" style="left:278.8px;top:213.80px;height:16px;line-height:16px;font-size:11.2px;font-weight:700;color:#1a1a1a;letter-spacing:0.1px;">Members</div>
<div class="t" style="left:30.8px;top:231.10px;height:17px;line-height:17px;font-size:11.8px;font-weight:400;color:#1a1a1a;letter-spacing:-0.15px;">San Francisco</div>
<div class="t" style="left:-105.80000000000001px;width:300px;text-align:right;top:231.10px;height:17px;line-height:17px;font-size:11.8px;font-weight:400;color:#1a1a1a;letter-spacing:0.5px;">6/1/2023</div>
<div class="t" style="left:-27px;width:300px;text-align:right;top:231.10px;height:17px;line-height:17px;font-size:11.8px;font-weight:400;color:#1a1a1a;letter-spacing:0px;">3</div>
<div class="t" style="left:37.19999999999999px;width:300px;text-align:right;top:231.10px;height:17px;line-height:17px;font-size:11.8px;font-weight:400;color:#1a1a1a;letter-spacing:0.12px;">1,000</div>
<div class="t" style="left:30.8px;top:248.90px;height:17px;line-height:17px;font-size:11.8px;font-weight:400;color:#1a1a1a;letter-spacing:-0.15px;">San Diego</div>
<div class="t" style="left:-105.80000000000001px;width:300px;text-align:right;top:248.90px;height:17px;line-height:17px;font-size:11.8px;font-weight:400;color:#1a1a1a;letter-spacing:0.5px;">6/5/2023</div>
<div class="t" style="left:-27px;width:300px;text-align:right;top:248.90px;height:17px;line-height:17px;font-size:11.8px;font-weight:400;color:#1a1a1a;letter-spacing:0px;">2</div>
<div class="t" style="left:37.19999999999999px;width:300px;text-align:right;top:248.90px;height:17px;line-height:17px;font-size:11.8px;font-weight:400;color:#1a1a1a;letter-spacing:0.12px;">5,000</div>
<div class="t" style="left:30.8px;top:266.70px;height:17px;line-height:17px;font-size:11.8px;font-weight:400;color:#1a1a1a;letter-spacing:-0.15px;">Los Angeles</div>
<div class="t" style="left:-105.80000000000001px;width:300px;text-align:right;top:266.70px;height:17px;line-height:17px;font-size:11.8px;font-weight:400;color:#1a1a1a;letter-spacing:0.5px;">5/10/2023</div>
<div class="t" style="left:-27px;width:300px;text-align:right;top:266.70px;height:17px;line-height:17px;font-size:11.8px;font-weight:400;color:#1a1a1a;letter-spacing:0px;">1</div>
<div class="t" style="left:37.19999999999999px;width:300px;text-align:right;top:266.70px;height:17px;line-height:17px;font-size:11.8px;font-weight:400;color:#1a1a1a;letter-spacing:0.12px;">10,000</div>
<div class="t" style="left:30.8px;top:284.50px;height:17px;line-height:17px;font-size:11.8px;font-weight:400;color:#1a1a1a;letter-spacing:-0.15px;">Sacramento</div>
<div class="t" style="left:-105.80000000000001px;width:300px;text-align:right;top:284.50px;height:17px;line-height:17px;font-size:11.8px;font-weight:400;color:#1a1a1a;letter-spacing:0.5px;">5/1/2023</div>
<div class="t" style="left:-27px;width:300px;text-align:right;top:284.50px;height:17px;line-height:17px;font-size:11.8px;font-weight:400;color:#1a1a1a;letter-spacing:0px;">1</div>
<div class="t" style="left:37.19999999999999px;width:300px;text-align:right;top:284.50px;height:17px;line-height:17px;font-size:11.8px;font-weight:400;color:#1a1a1a;letter-spacing:0.12px;">2,000</div>
<div class="t" style="left:30.8px;top:302.30px;height:17px;line-height:17px;font-size:11.8px;font-weight:400;color:#1a1a1a;letter-spacing:-0.15px;">Chicago</div>
<div class="t" style="left:-105.80000000000001px;width:300px;text-align:right;top:302.30px;height:17px;line-height:17px;font-size:11.8px;font-weight:400;color:#1a1a1a;letter-spacing:0.5px;">7/1/2023</div>
<div class="t" style="left:-27px;width:300px;text-align:right;top:302.30px;height:17px;line-height:17px;font-size:11.8px;font-weight:400;color:#1a1a1a;letter-spacing:0px;">3</div>
<div class="t" style="left:37.19999999999999px;width:300px;text-align:right;top:302.30px;height:17px;line-height:17px;font-size:11.8px;font-weight:400;color:#1a1a1a;letter-spacing:0.12px;">1,000</div>
<div class="t" style="left:30.8px;top:320.10px;height:17px;line-height:17px;font-size:11.8px;font-weight:400;color:#1a1a1a;letter-spacing:-0.15px;">Springfield</div>
<div class="t" style="left:-105.80000000000001px;width:300px;text-align:right;top:320.10px;height:17px;line-height:17px;font-size:11.8px;font-weight:400;color:#1a1a1a;letter-spacing:0.5px;">7/3/2023</div>
<div class="t" style="left:-27px;width:300px;text-align:right;top:320.10px;height:17px;line-height:17px;font-size:11.8px;font-weight:400;color:#1a1a1a;letter-spacing:0px;">2</div>
<div class="t" style="left:37.19999999999999px;width:300px;text-align:right;top:320.10px;height:17px;line-height:17px;font-size:11.8px;font-weight:400;color:#1a1a1a;letter-spacing:0.12px;">5,000</div>
<div class="t" style="left:30.8px;top:337.90px;height:17px;line-height:17px;font-size:11.8px;font-weight:400;color:#1a1a1a;letter-spacing:-0.15px;">Peoria</div>
<div class="t" style="left:-105.80000000000001px;width:300px;text-align:right;top:337.90px;height:17px;line-height:17px;font-size:11.8px;font-weight:400;color:#1a1a1a;letter-spacing:0.5px;">4/20/2023</div>
<div class="t" style="left:-27px;width:300px;text-align:right;top:337.90px;height:17px;line-height:17px;font-size:11.8px;font-weight:400;color:#1a1a1a;letter-spacing:0px;">1</div>
<div class="t" style="left:37.19999999999999px;width:300px;text-align:right;top:337.90px;height:17px;line-height:17px;font-size:11.8px;font-weight:400;color:#1a1a1a;letter-spacing:0.12px;">10,000</div>
<div class="t" style="left:30.8px;top:355.70px;height:17px;line-height:17px;font-size:11.8px;font-weight:400;color:#1a1a1a;letter-spacing:-0.15px;">Miami</div>
<div class="t" style="left:-105.80000000000001px;width:300px;text-align:right;top:355.70px;height:17px;line-height:17px;font-size:11.8px;font-weight:400;color:#1a1a1a;letter-spacing:0.5px;">4/25/2023</div>
<div class="t" style="left:-27px;width:300px;text-align:right;top:355.70px;height:17px;line-height:17px;font-size:11.8px;font-weight:400;color:#1a1a1a;letter-spacing:0px;">3</div>
<div class="t" style="left:37.19999999999999px;width:300px;text-align:right;top:355.70px;height:17px;line-height:17px;font-size:11.8px;font-weight:400;color:#1a1a1a;letter-spacing:0.12px;">2,000</div>
<div class="t" style="left:30.8px;top:373.50px;height:17px;line-height:17px;font-size:11.8px;font-weight:400;color:#1a1a1a;letter-spacing:-0.15px;">Tampa Bay</div>
<div class="t" style="left:-105.80000000000001px;width:300px;text-align:right;top:373.50px;height:17px;line-height:17px;font-size:11.8px;font-weight:400;color:#1a1a1a;letter-spacing:0.5px;">6/20/2023</div>
<div class="t" style="left:-27px;width:300px;text-align:right;top:373.50px;height:17px;line-height:17px;font-size:11.8px;font-weight:400;color:#1a1a1a;letter-spacing:0px;">2</div>
<div class="t" style="left:37.19999999999999px;width:300px;text-align:right;top:373.50px;height:17px;line-height:17px;font-size:11.8px;font-weight:400;color:#1a1a1a;letter-spacing:0.12px;">1,000</div>
<div class="t" style="left:30.8px;top:391.30px;height:17px;line-height:17px;font-size:11.8px;font-weight:400;color:#1a1a1a;letter-spacing:-0.15px;">Jacksonville</div>
<div class="t" style="left:-105.80000000000001px;width:300px;text-align:right;top:391.30px;height:17px;line-height:17px;font-size:11.8px;font-weight:400;color:#1a1a1a;letter-spacing:0.5px;">6/30/2023</div>
<div class="t" style="left:-27px;width:300px;text-align:right;top:391.30px;height:17px;line-height:17px;font-size:11.8px;font-weight:400;color:#1a1a1a;letter-spacing:0px;">3</div>
<div class="t" style="left:37.19999999999999px;width:300px;text-align:right;top:391.30px;height:17px;line-height:17px;font-size:11.8px;font-weight:400;color:#1a1a1a;letter-spacing:0.12px;">10,000</div>
<div class="b" style="left:2.5px;top:462px;width:889.0px;height:21.19999999999999px;background:#e6e6e6;border-top:1px solid #c8c8c8;"></div>
<div class="b" style="left:319px;top:462px;width:43.60000000000002px;height:19.5px;background:#fff;border-bottom:2px solid #217346;border-left:1px solid #d6d6d6;border-right:1px solid #d6d6d6;"></div>
<svg class="s" width="896" height="700" viewBox="0 0 896 700" style=""><path d="M28,469.5 v6 l-3.5,-3 z" fill="#217346"/><path d="M45.5,469.5 v6 l3.5,-3 z" fill="#217346"/><circle cx="65.5" cy="474.5" r="0.9" fill="#217346"/><circle cx="69.5" cy="474.5" r="0.9" fill="#217346"/><circle cx="73.5" cy="474.5" r="0.9" fill="#217346"/><path d="M80.5,466 v14 M195,466 v14 M491.8,466 v14" stroke="#c4c4c4" stroke-width="1"/><circle cx="585.5" cy="472.9" r="6.6" fill="none" stroke="#666" stroke-width="1.1"/><path d="M581.5,472.9 h8 M585.5,468.9 v8" stroke="#666" stroke-width="1.1"/><circle cx="607.2" cy="468.5" r="0.9" fill="#999"/><circle cx="607.2" cy="472.5" r="0.9" fill="#999"/><circle cx="607.2" cy="476.5" r="0.9" fill="#999"/><rect x="620.5" y="465.8" width="13" height="13.5" fill="#fff" stroke="#bbb" stroke-width="1"/><path d="M628.5,469.5 v6 l-3.5,-3 z" fill="#222"/><rect x="827" y="465.8" width="14" height="13.5" fill="#fff" stroke="#bbb" stroke-width="1"/><rect x="859.5" y="465.8" width="13.5" height="13.5" fill="#fff" stroke="#bbb" stroke-width="1"/><path d="M864.5,469.5 v6 l3.5,-3 z" fill="#222"/></svg>
<div class="t" style="left:90.3px;top:461.30px;height:18px;line-height:18px;font-size:13px;font-weight:400;color:#484848;letter-spacing:-0.92px;">SUMIF_COUNTIF</div>
<div class="t" style="left:206px;top:461.30px;height:18px;line-height:18px;font-size:13px;font-weight:400;color:#484848;letter-spacing:-0.32px;">ZeroBasedBudget</div>
<div class="t" style="left:328px;top:461.30px;height:18px;line-height:18px;font-size:12.6px;font-weight:700;color:#217346;letter-spacing:-0.4px;">MTE</div>
<div class="t" style="left:374px;top:461.30px;height:18px;line-height:18px;font-size:13px;font-weight:400;color:#484848;letter-spacing:-0.34px;">Scenario Summary</div>
<div class="t" style="left:503px;top:461.30px;height:18px;line-height:18px;font-size:13px;font-weight:400;color:#484848;letter-spacing:-0.34px;">Scenario! <span style="color:#217346;letter-spacing:0.5px">...</span></div>
<div class="b" style="left:2.5px;top:483.2px;width:889.0px;height:19.100000000000023px;background:#f3f2f1;border-top:1px solid #d2d2d2;"></div>
<div class="b" style="left:606px;top:483.2px;width:28px;height:19.30000000000001px;background:#d4d4d4;"></div>
<svg class="s" width="896" height="700" viewBox="0 0 896 700" style=""><rect x="55.5" y="488" width="12" height="10" fill="none" stroke="#555" stroke-width="1"/><path d="M55.5,490.5 h12 M57.5,493 h3 M57.5,495 h3" stroke="#555" stroke-width="0.9"/><circle cx="64.5" cy="495" r="3.2" fill="#f3f2f1" stroke="#555" stroke-width="1"/><circle cx="64.5" cy="495" r="1.3" fill="#555"/><path d="M509,496.5 h-4.5 v-9 h12.5 v5" fill="none" stroke="#555" stroke-width="1"/><path d="M508,498.5 h2" stroke="#555" stroke-width="1"/><circle cx="514" cy="496.5" r="2.2" fill="#f3f2f1" stroke="#555" stroke-width="1.6" stroke-dasharray="1.2,0.6"/><circle cx="514" cy="496.5" r="0.8" fill="#555"/><rect x="618.5" y="487.5" width="12" height="12" fill="none" stroke="#555" stroke-width="1.1"/><path d="M622.5,487.5 v12 M626.5,487.5 v12 M618.5,491.5 h12 M618.5,495.5 h12" stroke="#555" stroke-width="1.1"/><path d="M830.5,493.5 h7.5 M834.25,489.75 v7.5" stroke="#666" stroke-width="0.8"/></svg>
<div class="t" style="left:10.8px;top:487.00px;height:13px;line-height:13px;font-size:9.4px;font-weight:400;color:#6a6a6a;letter-spacing:-0.1px;">Ready</div>
<div class="t" style="left:391px;top:487.00px;height:13px;line-height:13px;font-size:9.6px;font-weight:400;color:#5e5e5e;letter-spacing:-0.1px;">Average: 2.1</div>
<div class="t" style="left:519px;top:487.00px;height:13px;line-height:13px;font-size:9.6px;font-weight:400;color:#5e5e5e;letter-spacing:-0.1px;">Display Settings</div>
<div class="t" style="left:851px;top:487.00px;height:13px;line-height:13px;font-size:9.6px;font-weight:400;color:#6a6a6a;letter-spacing:-0.1px;">100%</div>
<div class="b" style="left:456.4px;top:89.2px;width:177.6px;height:304.8px;background:#fff;box-shadow:0 1px 4px rgba(0,0,0,0.28);"></div>
<div class="b" style="left:457px;top:268px;width:177px;height:43px;background:#d2d1cf;"></div>
<div class="b" style="left:460px;top:312px;width:174px;height:1px;background:#ececec;"></div>
<div class="b" style="left:498px;top:178.6px;width:136px;height:1.0px;background:#ececec;"></div>
<svg class="s" width="896" height="700" viewBox="0 0 896 700" style=""><rect x="478.7" y="108.6" width="12" height="6.7" fill="#f9cf95"/><rect x="472.5" y="102.5" width="25.0" height="19.5" fill="none" stroke="#666" stroke-width="1.1"/><path d="M478.7,102.5 V122" stroke="#666" stroke-width="0.9900000000000001"/><path d="M490.7,102.5 V122" stroke="#666" stroke-width="0.9900000000000001"/><path d="M472.5,108.6 H497.5" stroke="#666" stroke-width="0.9900000000000001"/><path d="M472.5,115.3 H497.5" stroke="#666" stroke-width="0.9900000000000001"/><path d="M478.7,108.6 h12 v6.7 h-12 z" fill="none" stroke="#f0a040" stroke-width="1.2"/><rect x="483" y="114.6" width="16.2" height="11.7" fill="#fff" stroke="#444" stroke-width="1.1"/><path d="M494,116.9 l-5.2,2.6 l5.2,2.6 M488.8,124 h5.2" fill="none" stroke="#333" stroke-width="0.9"/><rect x="478.7" y="145.5" width="12" height="19.8" fill="#f9cf95"/><rect x="472.5" y="145.5" width="25.0" height="19.80000000000001" fill="none" stroke="#666" stroke-width="1.1"/><path d="M478.7,145.5 V165.3" stroke="#666" stroke-width="0.9900000000000001"/><path d="M490.7,145.5 V165.3" stroke="#666" stroke-width="0.9900000000000001"/><path d="M472.5,152 H497.5" stroke="#666" stroke-width="0.9900000000000001"/><path d="M472.5,158.7 H497.5" stroke="#666" stroke-width="0.9900000000000001"/><path d="M478.7,145.5 v19.8 M490.7,145.5 v19.8" stroke="#f0a040" stroke-width="1.2"/><path d="M484.5,159 v-10.5 M481.5,151.5 l3,-3 l3,3" fill="none" stroke="#333" stroke-width="1.1"/><rect x="483" y="157.8" width="16.2" height="12.5" fill="#fff" stroke="#444" stroke-width="1.1"/><rect x="472.5" y="191.8" width="25.0" height="19.599999999999994" fill="#fff" stroke="#555" stroke-width="1.1"/><path d="M477.5,191.8 V211.4" stroke="#555" stroke-width="0.9900000000000001"/><path d="M492.5,191.8 V211.4" stroke="#555" stroke-width="0.9900000000000001"/><path d="M472.5,198.3 H497.5" stroke="#555" stroke-width="0.9900000000000001"/><path d="M472.5,204.9 H497.5" stroke="#555" stroke-width="0.9900000000000001"/><rect x="477.5" y="191.8" width="7" height="6.5" fill="#6aaaf0" stroke="#3b8ed8" stroke-width="0.8"/><rect x="477.5" y="198.3" width="2.5" height="6.6" fill="#6aaaf0" stroke="#3b8ed8" stroke-width="0.8"/><rect x="477.5" y="204.9" width="5.5" height="6.5" fill="#6aaaf0" stroke="#3b8ed8" stroke-width="0.8"/><path d="M472.5,191.8 h25 v19.6 h-25 z" fill="none" stroke="#555" stroke-width="1.1"/><rect x="477.5" y="235.3" width="15" height="6.8" fill="#6fb0f0"/><rect x="477.5" y="242.1" width="15" height="6.8" fill="#f8d490"/><rect x="477.5" y="248.9" width="15" height="6.8" fill="#f7807e"/><rect x="472.5" y="235.3" width="25.0" height="20.399999999999977" fill="none" stroke="#555" stroke-width="1.1"/><path d="M477.5,235.3 V255.7" stroke="#555" stroke-width="0.9900000000000001"/><path d="M492.5,235.3 V255.7" stroke="#555" stroke-width="0.9900000000000001"/><path d="M472.5,242.1 H497.5" stroke="#555" stroke-width="0.9900000000000001"/><path d="M472.5,248.9 H497.5" stroke="#555" stroke-width="0.9900000000000001"/><rect x="472.5" y="278.8" width="25.0" height="20.19999999999999" fill="#fff" stroke="#333" stroke-width="1.1"/><path d="M477.5,278.8 V299" stroke="#333" stroke-width="0.9900000000000001"/><path d="M492.5,278.8 V299" stroke="#333" stroke-width="0.9900000000000001"/><path d="M472.5,285.5 H497.5" stroke="#333" stroke-width="0.9900000000000001"/><path d="M472.5,292.3 H497.5" stroke="#333" stroke-width="0.9900000000000001"/><circle cx="480.8" cy="282.2" r="1.3" fill="#2f6fc0"/><path d="M485.5,282.2 h5" stroke="#444" stroke-width="1.2"/><circle cx="480.8" cy="288.9" r="1.3" fill="#d03030"/><path d="M485.5,288.9 h5" stroke="#444" stroke-width="1.2"/><circle cx="480.8" cy="295.6" r="1.3" fill="#2f6fc0"/><path d="M485.5,295.6 h5" stroke="#444" stroke-width="1.2"/><rect x="468.2" y="319.2" width="14" height="12.5" fill="#fff" stroke="#555" stroke-width="1.2"/><rect x="471.5" y="322.2" width="7.4" height="6.5" fill="#f7b84e"/><path d="M471.5,319.2 v12.5 M478.9,319.2 v12.5 M468.2,322.2 h14 M468.2,328.7 h14" stroke="#777" stroke-width="0.8"/><rect x="468.2" y="346.2" width="14" height="12.5" fill="#fff" stroke="#555" stroke-width="1.2"/><rect x="471.5" y="349.2" width="7.4" height="6.5" fill="#f7b84e"/><path d="M471.5,346.2 v12.5 M478.9,346.2 v12.5 M468.2,349.2 h14 M468.2,355.7 h14" stroke="#777" stroke-width="0.8"/><path d="M472.2,357.7 l6.5,-6.5 l4,4 l-6.5,6.5 z" fill="#fff" stroke="#a040c0" stroke-width="1.2"/><path d="M472.2,357.7 l3,-3 l4,4 l-3,3 z" fill="#c070e0" stroke="#a040c0" stroke-width="1.1"/><rect x="467.6" y="370.8" width="13.5" height="12.6" fill="#ddd" stroke="#777" stroke-width="1"/><rect x="469.2" y="373.1" width="14" height="12.5" fill="#fff" stroke="#555" stroke-width="1.2"/><rect x="472.5" y="376.1" width="7.4" height="6.5" fill="#f7b84e"/><path d="M472.5,373.1 v12.5 M479.9,373.1 v12.5 M469.2,376.1 h14 M469.2,382.6 h14" stroke="#777" stroke-width="0.8"/><path d="M620.8,108.0 l4.2,4.2 l-4.2,4.2" fill="none" stroke="#3a3a3a" stroke-width="1.25"/><path d="M620.8,151.8 l4.2,4.2 l-4.2,4.2" fill="none" stroke="#3a3a3a" stroke-width="1.25"/><path d="M620.8,197.3 l4.2,4.2 l-4.2,4.2" fill="none" stroke="#3a3a3a" stroke-width="1.25"/><path d="M620.8,241.10000000000002 l4.2,4.2 l-4.2,4.2" fill="none" stroke="#3a3a3a" stroke-width="1.25"/><path d="M620.8,285.3 l4.2,4.2 l-4.2,4.2" fill="none" stroke="#3a3a3a" stroke-width="1.25"/><path d="M620.8,347.8 l4.2,4.2 l-4.2,4.2" fill="none" stroke="#3a3a3a" stroke-width="1.25"/></svg>
<div class="t" style="left:341.1px;width:300px;text-align:center;top:159.30px;height:10px;line-height:10px;font-size:9.5px;font-weight:400;color:#444;letter-spacing:-0.6px;">10</div>
<div class="t" style="left:506.8px;top:107.20px;height:15px;line-height:15px;font-size:10.7px;font-weight:700;color:#262626;letter-spacing:-0.15px;"><span style="text-decoration:underline;text-underline-offset:0.5px">H</span>ighlight Cells Rules</div>
<div class="t" style="left:506.8px;top:151.10px;height:15px;line-height:15px;font-size:10.7px;font-weight:700;color:#262626;letter-spacing:0.05px;"><span style="text-decoration:underline;text-underline-offset:0.5px">T</span>op/Bottom Rules</div>
<div class="t" style="left:506.8px;top:196.50px;height:15px;line-height:15px;font-size:10.7px;font-weight:700;color:#262626;letter-spacing:0.05px;"><span style="text-decoration:underline;text-underline-offset:0.5px">D</span>ata Bars</div>
<div class="t" style="left:506.8px;top:240.80px;height:15px;line-height:15px;font-size:10.7px;font-weight:700;color:#262626;letter-spacing:0.05px;">Color <span style="text-decoration:underline;text-underline-offset:0.5px">S</span>cales</div>
<div class="t" style="left:506.8px;top:284.30px;height:15px;line-height:15px;font-size:10.7px;font-weight:700;color:#262626;letter-spacing:0.05px;"><span style="text-decoration:underline;text-underline-offset:0.5px">I</span>con Sets</div>
<div class="t" style="left:490.7px;top:319.30px;height:15px;line-height:15px;font-size:10.9px;font-weight:400;color:#333;letter-spacing:-0.2px;"><span style="text-decoration:underline;text-underline-offset:0.5px">N</span>ew Rule...</div>
<div class="t" style="left:490.7px;top:345.80px;height:15px;line-height:15px;font-size:10.9px;font-weight:400;color:#333;letter-spacing:-0.2px;"><span style="text-decoration:underline;text-underline-offset:0.5px">C</span>lear Rules</div>
<div class="t" style="left:490.7px;top:372.10px;height:15px;line-height:15px;font-size:10.9px;font-weight:400;color:#333;letter-spacing:-0.2px;">Manage <span style="text-decoration:underline;text-underline-offset:0.5px">R</span>ules...</div>
<div class="b" style="left:634px;top:266.3px;width:193px;height:428.7px;background:#fff;box-shadow:0 1px 3px rgba(0,0,0,0.25);"></div>
<div class="b" style="left:634px;top:266.3px;width:193px;height:400.49999999999994px;border:3px solid #eb5848;"></div>
<div class="b" style="left:637px;top:387.5px;width:187px;height:1.0px;background:#e6e6e6;"></div>
<div class="b" style="left:637px;top:487.4px;width:187px;height:1.0px;background:#e6e6e6;"></div>
<div class="b" style="left:637px;top:566.2px;width:187px;height:1.0px;background:#e6e6e6;"></div>
<div class="t" style="left:648.5px;top:275.50px;height:15px;line-height:15px;font-size:10.8px;font-weight:700;color:#262626;letter-spacing:-0.1px;">Directional</div>
<div class="t" style="left:648.5px;top:395.50px;height:15px;line-height:15px;font-size:10.8px;font-weight:700;color:#262626;letter-spacing:-0.1px;">Shapes</div>
<div class="t" style="left:648.5px;top:494.80px;height:15px;line-height:15px;font-size:10.8px;font-weight:700;color:#262626;letter-spacing:-0.1px;">Indicators</div>
<div class="t" style="left:648.5px;top:573.70px;height:15px;line-height:15px;font-size:10.8px;font-weight:700;color:#262626;letter-spacing:-0.1px;">Ratings</div>
<div class="t" style="left:669px;top:672.40px;height:15px;line-height:15px;font-size:10.9px;font-weight:400;color:#333;letter-spacing:-0.2px;"><span style="text-decoration:underline;text-underline-offset:0.5px">M</span>ore Rules...</div>
<svg class="s" width="896" height="700" viewBox="0 0 896 700" style=""><defs><path id="arr" d="M0,-7 L5.8,-1.2 L5.8,1.9 L1.8,-2.1 L1.8,7 L-1.8,7 L-1.8,-2.1 L-5.8,1.9 L-5.8,-1.2 Z"/><path id="darr" d="M-4.5,-6 L6,-6 L6,4.5 L3.4,1.9 L3.4,-1.28 L-3.74,5.86 L-5.86,3.74 L1.28,-3.4 L-1.9,-3.4 Z"/><path id="star" d="M0,-6.6 L1.9,-2.3 L6.5,-2 L3,1.1 L4.1,5.9 L0,3.4 L-4.1,5.9 L-3,1.1 L-6.5,-2 L-1.9,-2.3 Z"/></defs><use href="#arr" transform="translate(647.2,306.9) rotate(0)" fill="#5b9e89" stroke="#3f7a66" stroke-width="0.6" stroke-linejoin="round"/><use href="#arr" transform="translate(665,306.9) rotate(90)" fill="#eec77f" stroke="#c49a4f" stroke-width="0.6" stroke-linejoin="round"/><use href="#arr" transform="translate(683,306.9) rotate(180)" fill="#dc5632" stroke="#b23c1c" stroke-width="0.6" stroke-linejoin="round"/><use href="#arr" transform="translate(742,306.9) rotate(0)" fill="#7a7a7a" stroke="#6a6a6a" stroke-width="0.6" stroke-linejoin="round"/><use href="#arr" transform="translate(760,306.9) rotate(90)" fill="#7a7a7a" stroke="#6a6a6a" stroke-width="0.6" stroke-linejoin="round"/><use href="#arr" transform="translate(778,306.9) rotate(180)" fill="#7a7a7a" stroke="#6a6a6a" stroke-width="0.6" stroke-linejoin="round"/><path d="M640.4000000000001,331.5 L647.2,323.5 L654.0,331.5 Z" fill="#5b9e89" stroke="#3f7a66" stroke-width="0.6"/><rect x="658" y="324.8" width="14" height="5.4" fill="#eec77f" stroke="#c49a4f" stroke-width="0.6"/><path d="M676,323.7 L690,323.7 L683,331.7 Z" fill="#dc5632" stroke="#b23c1c" stroke-width="0.6"/><use href="#arr" transform="translate(742,327.5) rotate(0)" fill="#7a7a7a" stroke="#6a6a6a" stroke-width="0.6" stroke-linejoin="round"/><use href="#darr" transform="translate(760,327.5) rotate(0)" fill="#7a7a7a" stroke="#6a6a6a" stroke-width="0.6" stroke-linejoin="round"/><use href="#darr" transform="translate(778,327.5) rotate(90)" fill="#7a7a7a" stroke="#6a6a6a" stroke-width="0.6" stroke-linejoin="round"/><use href="#arr" transform="translate(796,327.5) rotate(180)" fill="#7a7a7a" stroke="#6a6a6a" stroke-width="0.6" stroke-linejoin="round"/><use href="#arr" transform="translate(647.2,348.2) rotate(0)" fill="#5b9e89" stroke="#3f7a66" stroke-width="0.6" stroke-linejoin="round"/><use href="#darr" transform="translate(665,348.2) rotate(0)" fill="#eec77f" stroke="#c49a4f" stroke-width="0.6" stroke-linejoin="round"/><use href="#darr" transform="translate(683,348.2) rotate(90)" fill="#eec77f" stroke="#c49a4f" stroke-width="0.6" stroke-linejoin="round"/><use href="#arr" transform="translate(701,348.2) rotate(180)" fill="#dc5632" stroke="#b23c1c" stroke-width="0.6" stroke-linejoin="round"/><use href="#arr" transform="translate(742,348.2) rotate(0)" fill="#7a7a7a" stroke="#6a6a6a" stroke-width="0.6" stroke-linejoin="round"/><use href="#darr" transform="translate(760,348.2) rotate(0)" fill="#7a7a7a" stroke="#6a6a6a" stroke-width="0.6" stroke-linejoin="round"/><use href="#arr" transform="translate(778,348.2) rotate(90)" fill="#7a7a7a" stroke="#6a6a6a" stroke-width="0.6" stroke-linejoin="round"/><use href="#darr" transform="translate(796,348.2) rotate(90)" fill="#7a7a7a" stroke="#6a6a6a" stroke-width="0.6" stroke-linejoin="round"/><use href="#arr" transform="translate(814,348.2) rotate(180)" fill="#7a7a7a" stroke="#6a6a6a" stroke-width="0.6" stroke-linejoin="round"/><use href="#arr" transform="translate(647.2,369.4) rotate(0)" fill="#5b9e89" stroke="#3f7a66" stroke-width="0.6" stroke-linejoin="round"/><use href="#darr" transform="translate(665,369.4) rotate(0)" fill="#eec77f" stroke="#c49a4f" stroke-width="0.6" stroke-linejoin="round"/><use href="#arr" transform="translate(683,369.4) rotate(90)" fill="#eec77f" stroke="#c49a4f" stroke-width="0.6" stroke-linejoin="round"/><use href="#darr" transform="translate(701,369.4) rotate(90)" fill="#eec77f" stroke="#c49a4f" stroke-width="0.6" stroke-linejoin="round"/><use href="#arr" transform="translate(719,369.4) rotate(180)" fill="#dc5632" stroke="#b23c1c" stroke-width="0.6" stroke-linejoin="round"/><circle cx="647.2" cy="426.9" r="6.5" fill="#5b9e89" stroke="#3f7a66" stroke-width="0.7"/><circle cx="665" cy="426.9" r="6.5" fill="#eec77f" stroke="#c49a4f" stroke-width="0.7"/><circle cx="683" cy="426.9" r="6.5" fill="#dc5632" stroke="#b23c1c" stroke-width="0.7"/><rect x="735.3" y="420.09999999999997" width="13.4" height="13.6" rx="2" fill="#3f3f3f"/><circle cx="742" cy="426.9" r="4.2" fill="#5b9e89"/><rect x="753.3" y="420.09999999999997" width="13.4" height="13.6" rx="2" fill="#3f3f3f"/><circle cx="760" cy="426.9" r="4.2" fill="#eec77f"/><rect x="771.3" y="420.09999999999997" width="13.4" height="13.6" rx="2" fill="#3f3f3f"/><circle cx="778" cy="426.9" r="4.2" fill="#dc5632"/><circle cx="647.2" cy="447.6" r="6.5" fill="#5b9e89" stroke="#3f7a66" stroke-width="0.7"/><path d="M658.2,453.1 L665,441.1 L671.8,453.1 Z" fill="#eec77f" stroke="#c49a4f" stroke-width="0.7" stroke-linejoin="round"/><path d="M683,440.8 L689.8,447.6 L683,454.40000000000003 L676.2,447.6 Z" fill="#dc5632" stroke="#b23c1c" stroke-width="0.7" stroke-linejoin="round"/><circle cx="742" cy="447.6" r="6.5" fill="#5b9e89" stroke="#3f7a66" stroke-width="0.7"/><circle cx="760" cy="447.6" r="6.5" fill="#eec77f" stroke="#c49a4f" stroke-width="0.7"/><circle cx="778" cy="447.6" r="6.5" fill="#dc5632" stroke="#b23c1c" stroke-width="0.7"/><circle cx="796" cy="447.6" r="6.5" fill="#4a4a4a" stroke="#3a3a3a" stroke-width="0.7"/><circle cx="647.2" cy="468.2" r="6.5" fill="#dc5632" stroke="#b23c1c" stroke-width="0.7"/><circle cx="665" cy="468.2" r="6.5" fill="#f2b3aa" stroke="#d99a92" stroke-width="0.7"/><circle cx="683" cy="468.2" r="6.5" fill="#b3b3b3" stroke="#999" stroke-width="0.7"/><circle cx="701" cy="468.2" r="6.5" fill="#4a4a4a" stroke="#3a3a3a" stroke-width="0.7"/><circle cx="647.2" cy="526.4" r="6.5" fill="#5b9e89" stroke="#3f7a66" stroke-width="0.7"/><path d="M644.0,526.4 l2.2,2.4 l4.3,-4.6" fill="none" stroke="#fff" stroke-width="1.6"/><circle cx="665" cy="526.4" r="6.5" fill="#eec77f" stroke="#c49a4f" stroke-width="0.7"/><path d="M665,522.4 v5" stroke="#fff" stroke-width="1.7"/><circle cx="665" cy="529.6999999999999" r="0.95" fill="#fff"/><circle cx="683" cy="526.4" r="6.5" fill="#dc5632" stroke="#b23c1c" stroke-width="0.7"/><path d="M680.2,523.6 l5.6,5.6 M685.8,523.6 l-5.6,5.6" stroke="#fff" stroke-width="1.6"/><path d="M735.5,526.9 l2.2,-2.2 l3,3 l7,-7 l2.2,2.2 l-9.2,9.2 z" fill="#5b9e89" stroke="#3f7a66" stroke-width="0.5"/><path d="M758,519.9 h4 v8.8 h-4 z M758,530.0 h4 v3.2 h-4 z" fill="#eec77f" stroke="#c49a4f" stroke-width="0.6"/><path d="M773,521.4 l10,10 M783,521.4 l-10,10" stroke="#dc5632" stroke-width="2.8"/><path d="M642.8,540.8 v13" stroke="#666" stroke-width="1.1"/><path d="M643.4,540.8 L652.3,544.5 L643.4,548.3 Z" fill="#5b9e89" stroke="#3f7a66" stroke-width="0.5"/><path d="M660.7,540.8 v13" stroke="#666" stroke-width="1.1"/><path d="M661.3000000000001,540.8 L670.2,544.5 L661.3000000000001,548.3 Z" fill="#eec77f" stroke="#c49a4f" stroke-width="0.5"/><path d="M678.5,540.8 v13" stroke="#666" stroke-width="1.1"/><path d="M679.1,540.8 L688.0,544.5 L679.1,548.3 Z" fill="#dc5632" stroke="#b23c1c" stroke-width="0.5"/><use href="#star" transform="translate(647.2,605.2)" fill="#eec274" stroke="#b89444" stroke-width="0.8" stroke-linejoin="round"/><clipPath id="hl"><rect x="-7" y="-7" width="7" height="14"/></clipPath><use href="#star" transform="translate(665,605.2)" fill="#fff" stroke="#777" stroke-width="0.8" stroke-linejoin="round"/><use href="#star" transform="translate(665,605.2)" fill="#eec274" stroke="#b89444" stroke-width="0.8" stroke-linejoin="round" clip-path="url(#hl)"/><use href="#star" transform="translate(683,605.2)" fill="#fff" stroke="#777" stroke-width="0.8" stroke-linejoin="round"/><circle cx="647.2" cy="625.6" r="6.4" fill="#4a4a4a" stroke="#3a3a3a" stroke-width="0.8"/><circle cx="665" cy="625.6" r="6.4" fill="#fff" stroke="#3a3a3a" stroke-width="0.9"/><path d="M665,625.6 V619.2 A6.4,6.4 0 1 1 658.6,625.6 Z" fill="#4a4a4a"/><circle cx="683" cy="625.6" r="6.4" fill="#fff" stroke="#3a3a3a" stroke-width="0.9"/><path d="M683,619.2 A6.4,6.4 0 0 0 683,632.0 Z" fill="#4a4a4a"/><circle cx="701" cy="625.6" r="6.4" fill="#fff" stroke="#3a3a3a" stroke-width="0.9"/><path d="M701,625.6 V619.2 A6.4,6.4 0 0 1 707.4,625.6 Z" fill="#4a4a4a"/><circle cx="719" cy="625.6" r="6.4" fill="#fff" stroke="#3a3a3a" stroke-width="0.9"/><rect x="640.6" y="639.4" width="6.6" height="6.6" fill="#3f7fc4"/><rect x="647.2" y="639.4" width="6.6" height="6.6" fill="#3f7fc4"/><rect x="640.6" y="646.0" width="6.6" height="6.6" fill="#3f7fc4"/><rect x="647.2" y="646.0" width="6.6" height="6.6" fill="#3f7fc4"/><rect x="640.6" y="639.4" width="13.2" height="13.2" fill="none" stroke="#777" stroke-width="0.7"/><path d="M647.2,639.4 v13.2 M640.6,646.0 h13.2" stroke="#888" stroke-width="0.6"/><rect x="658.4" y="639.4" width="6.6" height="6.6" fill="#3f7fc4"/><rect x="665.0" y="639.4" width="6.6" height="6.6" fill="#bdbdbd"/><rect x="658.4" y="646.0" width="6.6" height="6.6" fill="#3f7fc4"/><rect x="665.0" y="646.0" width="6.6" height="6.6" fill="#3f7fc4"/><rect x="658.4" y="639.4" width="13.2" height="13.2" fill="none" stroke="#777" stroke-width="0.7"/><path d="M665.0,639.4 v13.2 M658.4,646.0 h13.2" stroke="#888" stroke-width="0.6"/><rect x="676.4" y="639.4" width="6.6" height="6.6" fill="#bdbdbd"/><rect x="683.0" y="639.4" width="6.6" height="6.6" fill="#bdbdbd"/><rect x="676.4" y="646.0" width="6.6" height="6.6" fill="#3f7fc4"/><rect x="683.0" y="646.0" width="6.6" height="6.6" fill="#3f7fc4"/><rect x="676.4" y="639.4" width="13.2" height="13.2" fill="none" stroke="#777" stroke-width="0.7"/><path d="M683.0,639.4 v13.2 M676.4,646.0 h13.2" stroke="#888" stroke-width="0.6"/><rect x="694.4" y="639.4" width="6.6" height="6.6" fill="#bdbdbd"/><rect x="701.0" y="639.4" width="6.6" height="6.6" fill="#bdbdbd"/><rect x="694.4" y="646.0" width="6.6" height="6.6" fill="#3f7fc4"/><rect x="701.0" y="646.0" width="6.6" height="6.6" fill="#bdbdbd"/><rect x="694.4" y="639.4" width="13.2" height="13.2" fill="none" stroke="#777" stroke-width="0.7"/><path d="M701.0,639.4 v13.2 M694.4,646.0 h13.2" stroke="#888" stroke-width="0.6"/><rect x="712.4" y="639.4" width="6.6" height="6.6" fill="#bdbdbd"/><rect x="719.0" y="639.4" width="6.6" height="6.6" fill="#bdbdbd"/><rect x="712.4" y="646.0" width="6.6" height="6.6" fill="#bdbdbd"/><rect x="719.0" y="646.0" width="6.6" height="6.6" fill="#bdbdbd"/><rect x="712.4" y="639.4" width="13.2" height="13.2" fill="none" stroke="#777" stroke-width="0.7"/><path d="M719.0,639.4 v13.2 M712.4,646.0 h13.2" stroke="#888" stroke-width="0.6"/><rect x="735.7" y="606.2" width="3.15" height="5.5" fill="#3f7fc4" stroke="#2f5f99" stroke-width="0.5"/><rect x="738.85" y="603.7" width="3.15" height="8" fill="#bcbcbc" stroke="#888" stroke-width="0.5"/><rect x="742.0" y="601.2" width="3.15" height="10.5" fill="#bcbcbc" stroke="#888" stroke-width="0.5"/><rect x="745.1500000000001" y="598.3000000000001" width="3.15" height="13.4" fill="#bcbcbc" stroke="#888" stroke-width="0.5"/><rect x="753.7" y="606.2" width="3.15" height="5.5" fill="#3f7fc4" stroke="#2f5f99" stroke-width="0.5"/><rect x="756.85" y="603.7" width="3.15" height="8" fill="#3f7fc4" stroke="#2f5f99" stroke-width="0.5"/><rect x="760.0" y="601.2" width="3.15" height="10.5" fill="#bcbcbc" stroke="#888" stroke-width="0.5"/><rect x="763.1500000000001" y="598.3000000000001" width="3.15" height="13.4" fill="#bcbcbc" stroke="#888" stroke-width="0.5"/><rect x="771.7" y="606.2" width="3.15" height="5.5" fill="#3f7fc4" stroke="#2f5f99" stroke-width="0.5"/><rect x="774.85" y="603.7" width="3.15" height="8" fill="#3f7fc4" stroke="#2f5f99" stroke-width="0.5"/><rect x="778.0" y="601.2" width="3.15" height="10.5" fill="#3f7fc4" stroke="#2f5f99" stroke-width="0.5"/><rect x="781.1500000000001" y="598.3000000000001" width="3.15" height="13.4" fill="#bcbcbc" stroke="#888" stroke-width="0.5"/><rect x="789.7" y="606.2" width="3.15" height="5.5" fill="#3f7fc4" stroke="#2f5f99" stroke-width="0.5"/><rect x="792.85" y="603.7" width="3.15" height="8" fill="#3f7fc4" stroke="#2f5f99" stroke-width="0.5"/><rect x="796.0" y="601.2" width="3.15" height="10.5" fill="#3f7fc4" stroke="#2f5f99" stroke-width="0.5"/><rect x="799.1500000000001" y="598.3000000000001" width="3.15" height="13.4" fill="#3f7fc4" stroke="#2f5f99" stroke-width="0.5"/><rect x="735.7" y="626.8000000000001" width="3.15" height="5.5" fill="#bcbcbc" stroke="#888" stroke-width="0.5"/><rect x="738.85" y="624.3000000000001" width="3.15" height="8" fill="#bcbcbc" stroke="#888" stroke-width="0.5"/><rect x="742.0" y="621.8000000000001" width="3.15" height="10.5" fill="#bcbcbc" stroke="#888" stroke-width="0.5"/><rect x="745.1500000000001" y="618.9000000000001" width="3.15" height="13.4" fill="#bcbcbc" stroke="#888" stroke-width="0.5"/><rect x="753.7" y="626.8000000000001" width="3.15" height="5.5" fill="#3f7fc4" stroke="#2f5f99" stroke-width="0.5"/><rect x="756.85" y="624.3000000000001" width="3.15" height="8" fill="#bcbcbc" stroke="#888" stroke-width="0.5"/><rect x="760.0" y="621.8000000000001" width="3.15" height="10.5" fill="#bcbcbc" stroke="#888" stroke-width="0.5"/><rect x="763.1500000000001" y="618.9000000000001" width="3.15" height="13.4" fill="#bcbcbc" stroke="#888" stroke-width="0.5"/><rect x="771.7" y="626.8000000000001" width="3.15" height="5.5" fill="#3f7fc4" stroke="#2f5f99" stroke-width="0.5"/><rect x="774.85" y="624.3000000000001" width="3.15" height="8" fill="#3f7fc4" stroke="#2f5f99" stroke-width="0.5"/><rect x="778.0" y="621.8000000000001" width="3.15" height="10.5" fill="#bcbcbc" stroke="#888" stroke-width="0.5"/><rect x="781.1500000000001" y="618.9000000000001" width="3.15" height="13.4" fill="#bcbcbc" stroke="#888" stroke-width="0.5"/><rect x="789.7" y="626.8000000000001" width="3.15" height="5.5" fill="#3f7fc4" stroke="#2f5f99" stroke-width="0.5"/><rect x="792.85" y="624.3000000000001" width="3.15" height="8" fill="#3f7fc4" stroke="#2f5f99" stroke-width="0.5"/><rect x="796.0" y="621.8000000000001" width="3.15" height="10.5" fill="#3f7fc4" stroke="#2f5f99" stroke-width="0.5"/><rect x="799.1500000000001" y="618.9000000000001" width="3.15" height="13.4" fill="#bcbcbc" stroke="#888" stroke-width="0.5"/><rect x="807.7" y="626.8000000000001" width="3.15" height="5.5" fill="#3f7fc4" stroke="#2f5f99" stroke-width="0.5"/><rect x="810.85" y="624.3000000000001" width="3.15" height="8" fill="#3f7fc4" stroke="#2f5f99" stroke-width="0.5"/><rect x="814.0" y="621.8000000000001" width="3.15" height="10.5" fill="#3f7fc4" stroke="#2f5f99" stroke-width="0.5"/><rect x="817.1500000000001" y="618.9000000000001" width="3.15" height="13.4" fill="#3f7fc4" stroke="#2f5f99" stroke-width="0.5"/></svg>
</body></html>
